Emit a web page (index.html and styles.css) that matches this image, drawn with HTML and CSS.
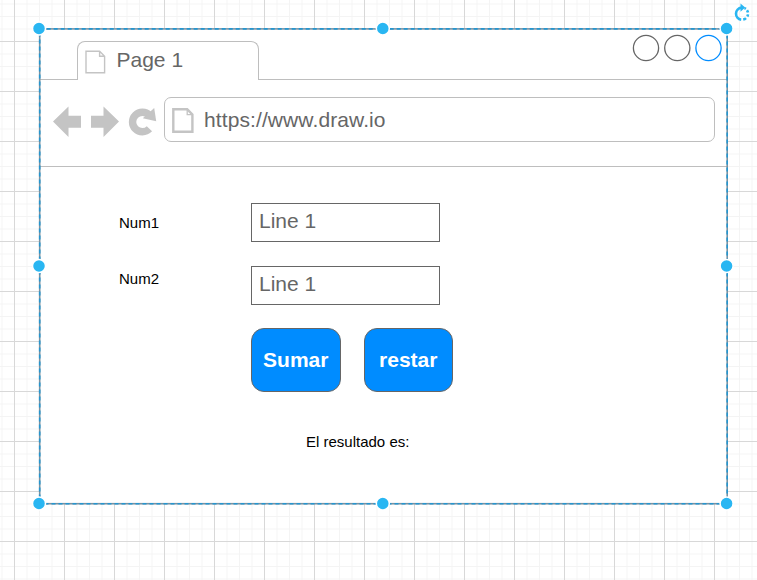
FILE: index.html
```html
<!DOCTYPE html>
<html lang="es">
<head>
<meta charset="utf-8">
<title>Wireframe</title>
<link rel="stylesheet" href="styles.css">
</head>
<body>
<main class="canvas">
  <section class="window">
    <header class="titlebar">
      <div class="lead"></div>
      <div class="tab">
        <svg class="tab-icon" width="22" height="25" viewBox="0 0 22 25"><path d="M1 1.200h13.600l5 5v16.500H1zM14.600 1.200v5h5" fill="none" stroke="#c4c4c4" stroke-width="1.400"/></svg>
        <span>Page 1</span>
      </div>
      <div class="controls">
        <svg width="90" height="28" viewBox="0 0 90 28" fill="none" stroke="#666" stroke-width="1.300">
          <circle cx="14" cy="14" r="12.600"/><circle cx="45.300" cy="14" r="12.600"/><circle cx="76.500" cy="14" r="12.600" stroke="#008cff"/>
        </svg>
      </div>
    </header>
    <nav class="toolbar">
      <svg class="nav-icons" width="106" height="32" viewBox="0 0 106 32" fill="#c4c4c4">
        <path d="M0 15.500 15.500.5v9.200H28v12H15.500v9.200z"/>
        <path d="M66 15.500 50.500.5v9.200H38v12h12.500v9.200z"/>
        <path d="M96.400 22.800A9.800 9.800 0 1 1 96.400 9.200" fill="none" stroke="#c4c4c4" stroke-width="7.400"/>
        <path d="M101.200 2 103.200 15.200 89.800 12.300z"/>
      </svg>
      <div class="address">
        <svg width="23" height="27" viewBox="0 0 23 27"><path d="M1.300 1.300h13.900l5.200 5.200v17.200H1.300z" fill="none" stroke="#c4c4c4" stroke-width="2.400"/><path d="M15.200 1.500v5.200h5" fill="none" stroke="#c4c4c4" stroke-width="1.300"/></svg>
        <span>https://www.draw.io</span>
      </div>
    </nav>
    <div class="content">
      <div class="row"><label>Num1</label><div class="field">Line 1</div></div>
      <div class="row second"><label>Num2</label><div class="field">Line 1</div></div>
      <div class="buttons"><div class="button">Sumar</div><div class="button">restar</div></div>
      <p class="result">El resultado es:</p>
    </div>
  </section>
  <svg class="selection" width="757" height="580" viewBox="0 0 757 580">
    <rect x="39.700" y="28.900" width="687.500" height="474.800" fill="none" stroke="#7b91a0" stroke-width="1.600"/>
    <rect x="39.700" y="28.900" width="687.500" height="474.800" fill="none" stroke="#2496d0" stroke-width="1.600" stroke-dasharray="4 3"/>
    <g fill="#29b6f2" stroke="#fff" stroke-width="1.500">
      <circle cx="39" cy="28.500" r="6.500"/><circle cx="382.800" cy="28.500" r="6.500"/><circle cx="726.600" cy="28.500" r="6.500"/>
      <circle cx="39" cy="266" r="6.500"/><circle cx="726.600" cy="266" r="6.500"/>
      <circle cx="39" cy="503.500" r="6.500"/><circle cx="382.800" cy="503.500" r="6.500"/><circle cx="726.600" cy="503.500" r="6.500"/>
    </g>
    <g fill="none" stroke="#29b6f2" stroke-width="2.600">
      <path d="M741.500 7.600A6.100 6.100 0 0 0 741.200 19.700"/>
      <path d="M743.200 19.600A6.100 6.100 0 0 0 746 18.100M747.300 16.500A6.100 6.100 0 0 0 748 14.400M748 12.600A6.100 6.100 0 0 0 747 10.200M745.900 8.900A6.100 6.100 0 0 0 744.500 8.100"/>
    </g>
    <path d="M740.500 3.500 745.200 7.600 740.500 11.700z" fill="#29b6f2"/>
  </svg>
</main>
</body>
</html>
```
FILE: styles.css
```css
* { box-sizing: border-box; }
body { margin: 0; background: #fff; font-family: "Liberation Sans", Arial, sans-serif; }
.canvas {
  position: relative;
  width: 757px;
  height: 580px;
  overflow: hidden;
  background-image:
    linear-gradient(90deg, #d8d8d8 1px, transparent 1px),
    linear-gradient(#d8d8d8 1px, transparent 1px),
    linear-gradient(90deg, #f4f4f4 1px, transparent 1px),
    linear-gradient(#f4f4f4 1px, transparent 1px);
  background-size: 50px 50px, 50px 50px, 12.5px 12.5px, 12.5px 12.5px;
  background-position: 14px 41px, 14px 41px, 14px 41px, 14px 41px;
}
.window {
  position: absolute;
  left: 39px;
  top: 28px;
  width: 689px;
  height: 476px;
  background: #fff;
}
.titlebar { display: flex; height: 52px; }
.lead { width: 39px; border-bottom: 1px solid #bebebe; }
.tab {
  display: flex;
  width: 182px;
  height: 39px;
  margin: 13px 0 0 -1px;
  padding-left: 7px;
  border: 1px solid #bebebe;
  border-bottom: 0;
  border-radius: 8px 8px 0 0;
  font-size: 21px;
  line-height: 36px;
  color: #666;
}
.tab-icon { margin: 8px 9.500px 0 0; }
.controls {
  display: flex;
  flex: 1;
  justify-content: flex-end;
  padding: 6px 6px 0 0;
  border-bottom: 1px solid #bebebe;
}
.toolbar {
  display: flex;
  height: 87px;
  padding: 17px 13px 0 14px;
  border-bottom: 1px solid #bebebe;
}
.nav-icons { margin: 9px 5px 0 0; }
.address {
  display: flex;
  flex: 1;
  height: 45px;
  padding: 10px 0 0 7px;
  border: 1px solid #bebebe;
  border-radius: 7px;
  color: #666;
  font-size: 21px;
  line-height: 24px;
  letter-spacing: 0.1px;
}
.address svg { margin-right: 9px; }
.content { padding: 36px 0 0 80px; }
.row { display: flex; height: 39px; font-size: 15px; }
.row label { width: 132px; line-height: 40px; }
.second { margin-top: 24px; }
.second label { line-height: 26px; }
.field {
  width: 189px;
  height: 39px;
  padding-left: 7px;
  border: 1px solid #666;
  color: #666;
  font-size: 21px;
  line-height: 34px;
}
.buttons { display: flex; gap: 23px; margin: 23px 0 0 132px; }
.button {
  width: 89.500px;
  height: 64px;
  border: 1px solid #666;
  border-radius: 13px;
  background: #008cff;
  color: #fff;
  font-size: 21px;
  font-weight: bold;
  line-height: 62px;
  text-align: center;
}
.result { margin: 41px 0 0 187px; font-size: 15px; line-height: 18px; }
.selection { position: absolute; left: 0; top: 0; }
```
